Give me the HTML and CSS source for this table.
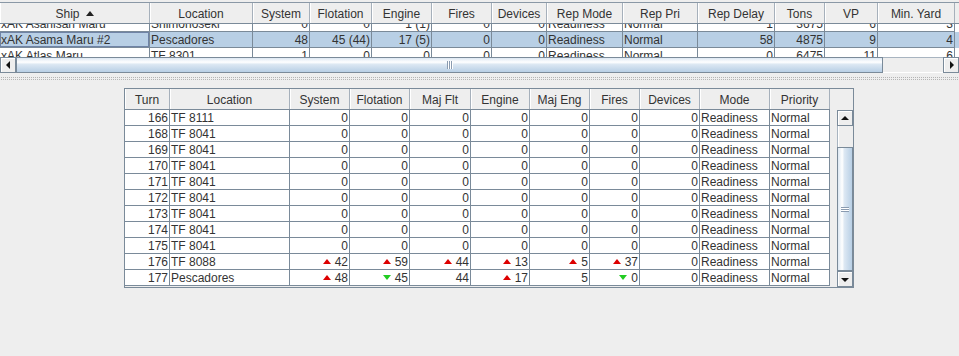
FILE: index.html
```html
<!DOCTYPE html>
<html>
<head>
<meta charset="utf-8">
<link rel="stylesheet" href="styles.css">
</head>
<body>
<div class="top-pane">
  <div class="top-table">
    <div class="thead top-cols">
      <div class="th">Ship<span class="sort"></span></div>
      <div class="th">Location</div>
      <div class="th">System</div>
      <div class="th">Flotation</div>
      <div class="th">Engine</div>
      <div class="th">Fires</div>
      <div class="th">Devices</div>
      <div class="th">Rep Mode</div>
      <div class="th">Rep Pri</div>
      <div class="th">Rep Delay</div>
      <div class="th">Tons</div>
      <div class="th">VP</div>
      <div class="th">Min. Yard</div>
    </div>
    <div class="viewport">
      <div class="rows-scrolled">
        <div class="row top-cols">
          <div class="td">xAK Asahisan Maru</div><div class="td">Shimonoseki</div><div class="td num">0</div><div class="td num">0</div><div class="td num">1 (1)</div><div class="td num">0</div><div class="td num">0</div><div class="td">Readiness</div><div class="td">Normal</div><div class="td num">1</div><div class="td num">3675</div><div class="td num">6</div><div class="td num">3</div>
        </div>
        <div class="row top-cols selected">
          <div class="td focus">xAK Asama Maru #2</div><div class="td">Pescadores</div><div class="td num">48</div><div class="td num">45 (44)</div><div class="td num">17 (5)</div><div class="td num">0</div><div class="td num">0</div><div class="td">Readiness</div><div class="td">Normal</div><div class="td num">58</div><div class="td num">4875</div><div class="td num">9</div><div class="td num">4</div>
        </div>
        <div class="row top-cols">
          <div class="td">xAK Atlas Maru</div><div class="td">TF 8301</div><div class="td num">1</div><div class="td num">0</div><div class="td num">0</div><div class="td num">0</div><div class="td num">0</div><div class="td">Readiness</div><div class="td">Normal</div><div class="td num">0</div><div class="td num">6475</div><div class="td num">11</div><div class="td num">6</div>
        </div>
      </div>
    </div>
  </div>
  <div class="hscroll">
    <div class="sb-btn arrow-left"></div>
    <div class="hthumb"><span class="hgrip"></span></div>
    <div class="htrack"></div>
    <div class="sb-btn arrow-right"></div>
  </div>
</div>
<div class="divider"><div class="bumps"></div></div>
<div class="bottom-pane">
  <div class="history">
    <div class="hist-head">
      <div class="thead hist-cols">
        <div class="th">Turn</div>
        <div class="th">Location</div>
        <div class="th">System</div>
        <div class="th">Flotation</div>
        <div class="th">Maj Flt</div>
        <div class="th">Engine</div>
        <div class="th">Maj Eng</div>
        <div class="th">Fires</div>
        <div class="th">Devices</div>
        <div class="th">Mode</div>
        <div class="th">Priority</div>
      </div>
      <div class="corner"></div>
    </div>
    <div class="hist-body">
      <div class="hist-rows">
        <div class="row hist-cols"><div class="td num">166</div><div class="td">TF 8111</div><div class="td num">0</div><div class="td num">0</div><div class="td num">0</div><div class="td num">0</div><div class="td num">0</div><div class="td num">0</div><div class="td num">0</div><div class="td">Readiness</div><div class="td">Normal</div></div>
        <div class="row hist-cols"><div class="td num">168</div><div class="td">TF 8041</div><div class="td num">0</div><div class="td num">0</div><div class="td num">0</div><div class="td num">0</div><div class="td num">0</div><div class="td num">0</div><div class="td num">0</div><div class="td">Readiness</div><div class="td">Normal</div></div>
        <div class="row hist-cols"><div class="td num">169</div><div class="td">TF 8041</div><div class="td num">0</div><div class="td num">0</div><div class="td num">0</div><div class="td num">0</div><div class="td num">0</div><div class="td num">0</div><div class="td num">0</div><div class="td">Readiness</div><div class="td">Normal</div></div>
        <div class="row hist-cols"><div class="td num">170</div><div class="td">TF 8041</div><div class="td num">0</div><div class="td num">0</div><div class="td num">0</div><div class="td num">0</div><div class="td num">0</div><div class="td num">0</div><div class="td num">0</div><div class="td">Readiness</div><div class="td">Normal</div></div>
        <div class="row hist-cols"><div class="td num">171</div><div class="td">TF 8041</div><div class="td num">0</div><div class="td num">0</div><div class="td num">0</div><div class="td num">0</div><div class="td num">0</div><div class="td num">0</div><div class="td num">0</div><div class="td">Readiness</div><div class="td">Normal</div></div>
        <div class="row hist-cols"><div class="td num">172</div><div class="td">TF 8041</div><div class="td num">0</div><div class="td num">0</div><div class="td num">0</div><div class="td num">0</div><div class="td num">0</div><div class="td num">0</div><div class="td num">0</div><div class="td">Readiness</div><div class="td">Normal</div></div>
        <div class="row hist-cols"><div class="td num">173</div><div class="td">TF 8041</div><div class="td num">0</div><div class="td num">0</div><div class="td num">0</div><div class="td num">0</div><div class="td num">0</div><div class="td num">0</div><div class="td num">0</div><div class="td">Readiness</div><div class="td">Normal</div></div>
        <div class="row hist-cols"><div class="td num">174</div><div class="td">TF 8041</div><div class="td num">0</div><div class="td num">0</div><div class="td num">0</div><div class="td num">0</div><div class="td num">0</div><div class="td num">0</div><div class="td num">0</div><div class="td">Readiness</div><div class="td">Normal</div></div>
        <div class="row hist-cols"><div class="td num">175</div><div class="td">TF 8041</div><div class="td num">0</div><div class="td num">0</div><div class="td num">0</div><div class="td num">0</div><div class="td num">0</div><div class="td num">0</div><div class="td num">0</div><div class="td">Readiness</div><div class="td">Normal</div></div>
        <div class="row hist-cols"><div class="td num">176</div><div class="td">TF 8088</div><div class="td num"><span class="up"></span>42</div><div class="td num"><span class="up"></span>59</div><div class="td num"><span class="up"></span>44</div><div class="td num"><span class="up"></span>13</div><div class="td num"><span class="up"></span>5</div><div class="td num"><span class="up"></span>37</div><div class="td num">0</div><div class="td">Readiness</div><div class="td">Normal</div></div>
        <div class="row hist-cols"><div class="td num">177</div><div class="td">Pescadores</div><div class="td num"><span class="up"></span>48</div><div class="td num"><span class="down"></span>45</div><div class="td num">44</div><div class="td num"><span class="up"></span>17</div><div class="td num">5</div><div class="td num"><span class="down"></span>0</div><div class="td num">0</div><div class="td">Readiness</div><div class="td">Normal</div></div>
      </div>
      <div class="vgap"></div>
      <div class="vscroll">
        <div class="sb-btn arrow-up"></div>
        <div class="vtrack"></div>
        <div class="vthumb"><span class="vgrip"></span></div>
        <div class="sb-btn arrow-down"></div>
      </div>
    </div>
  </div>
</div>
</body>
</html>
```

FILE: styles.css
```css
* { box-sizing: border-box; }
html, body { margin: 0; padding: 0; background: #eeeeee; }
body {
  font-family: "Liberation Sans", Arial, sans-serif;
  font-size: 12px;
  color: #333333;
  width: 959px;
  height: 356px;
  overflow: hidden;
}

/* ---------- shared table parts ---------- */
.thead { height: 21px; background: #eeeeee; border-bottom: 1px solid #7a8a99; }
.th {
  border-right: 1px solid #a6b0bb;
  box-shadow: inset 1px 0 0 #ffffff;
  text-align: center;
  line-height: 18px;
  padding-top: 2px;
  white-space: nowrap;
  overflow: hidden;
}
.row { height: 16px; background: #ffffff; }
.td {
  border-right: 1px solid #7a8a99;
  border-bottom: 1px solid #7a8a99;
  line-height: 14px;
  padding: 1px 2px 0 1px;
  white-space: nowrap;
  overflow: hidden;
}
.td.num { text-align: right; padding: 1px 1px 0 1px; }
.selected { background: #b8cfe5; }
.focus { box-shadow: inset 0 0 0 1px #6f83a6; }

.sort {
  display: inline-block;
  width: 0; height: 0;
  border-left: 4px solid transparent;
  border-right: 4px solid transparent;
  border-bottom: 5px solid #222222;
  margin-left: 6px;
  vertical-align: 2px;
}

/* ---------- top ship table ---------- */
.top-pane { padding-top: 2px; }
.top-table { border-top: 1px solid #8a98a6; }
.top-cols {
  display: grid;
  grid-template-columns: 150px 103px 57px 62px 60px 60px 55px 76px 75px 77px 50px 53px 77px;
}
.viewport { height: 33px; overflow: hidden; background: #ffffff; }
.rows-scrolled { margin-top: -8px; }

/* ---------- scrollbars ---------- */
.hscroll { display: flex; height: 16px; }
.sb-btn {
  position: relative;
  flex: 0 0 16px;
  width: 16px; height: 16px;
  background: #eeeeee;
  border: 1px solid #7a8a99;
  box-shadow: inset 1px 1px 0 #ffffff;
}
.sb-btn::before {
  content: "";
  position: absolute;
  width: 0; height: 0;
}
.arrow-left::before {
  left: 5px; top: 3px;
  border-top: 4px solid transparent;
  border-bottom: 4px solid transparent;
  border-right: 4px solid #111111;
}
.arrow-right::before {
  left: 6px; top: 3px;
  border-top: 4px solid transparent;
  border-bottom: 4px solid transparent;
  border-left: 4px solid #111111;
}
.arrow-up::before {
  left: 3px; top: 5px;
  border-left: 4px solid transparent;
  border-right: 4px solid transparent;
  border-bottom: 4px solid #111111;
}
.arrow-down::before {
  left: 3px; top: 6px;
  border-left: 4px solid transparent;
  border-right: 4px solid transparent;
  border-top: 4px solid #111111;
}
.hthumb {
  flex: 0 0 867px;
  border: 1px solid #7a8a99;
  background: linear-gradient(to bottom, #dde8f3 0%, #ffffff 30%, #dde8f3 45%, #b8cfe5 100%);
  display: flex;
  align-items: center;
  justify-content: center;
}
.hgrip {
  width: 6px; height: 8px;
  background: repeating-linear-gradient(to right, #8a9bb0 0 1px, #ffffff 1px 2px);
}
.htrack {
  flex: 1;
  background: #eeeeee;
  border-top: 1px solid #a8b4c0;
  border-bottom: 1px solid #ffffff;
}

/* ---------- split divider ---------- */
.divider { height: 15px; padding-top: 4px; }
.bumps {
  height: 4px;
  background: conic-gradient(#b4b4b4 25%, transparent 0) 0 0 / 2px 2px;
}

/* ---------- bottom history table ---------- */
.history {
  margin-left: 124px;
  width: 730px;
  border: 1px solid #7a8a99;
  background: #eeeeee;
}
.hist-head { display: flex; }
.hist-cols {
  display: grid;
  grid-template-columns: 45px 120px 60px 60px 61px 59px 60px 50px 60px 70px 60px;
}
.hist-head .hist-cols { width: 705px; }
.corner { flex: 1; height: 21px; background: #eeeeee; }
.hist-body { display: flex; height: 177px; }
.hist-rows { width: 705px; height: 176px; background: #ffffff; }
.vgap { width: 7px; background: #eeeeee; }
.vscroll { width: 16px; display: flex; flex-direction: column; }
.vtrack {
  flex: 0 0 21px;
  background: #eeeeee;
  border-left: 1px solid #a8b4c0;
  box-shadow: inset 1px 0 0 #ffffff;
}
.vthumb {
  flex: 1;
  border: 1px solid #7a8a99;
  background: linear-gradient(to right, #dde8f3 0%, #ffffff 30%, #dde8f3 45%, #b8cfe5 100%);
  display: flex;
  align-items: center;
  justify-content: center;
}
.vgrip {
  width: 8px; height: 5px;
  background: repeating-linear-gradient(to bottom, #8a9bb0 0 1px, #ffffff 1px 2px);
}

/* change indicators */
.up, .down {
  display: inline-block;
  width: 0; height: 0;
  border-left: 4.5px solid transparent;
  border-right: 4.5px solid transparent;
  margin-right: 4px;
  vertical-align: 2px;
}
.up { border-bottom: 5px solid #dd0000; }
.down { border-top: 5px solid #22cc22; }
```
